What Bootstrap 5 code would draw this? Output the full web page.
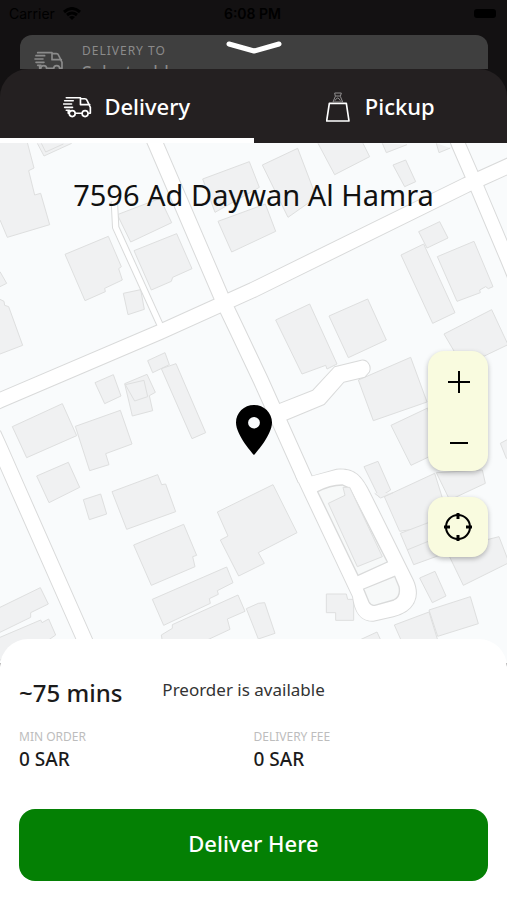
<!DOCTYPE html>
<html lang="en">
<head>
<meta charset="utf-8">
<meta name="viewport" content="width=device-width, initial-scale=1">
<title>Delivery location</title>
<link href="https://cdn.jsdelivr.net/npm/bootstrap@5.3.0/dist/css/bootstrap.min.css" rel="stylesheet">
<style>
  body { font-family: "Noto Sans", "Open Sans", sans-serif; background: #131112; color: #1b1b1b; }
  svg { display: block; fill: none; }
  .status { height: 27px; font: 14px/27px Inter, sans-serif; color: #000; padding: 0 11px 0 9px; }
  .status > * { flex: 1; }
  .clock { font-weight: 600; }
  .battery { width: 22px; height: 9px; border-radius: 3px; background: #000; }
  .address { height: 34px; margin: 8px 19px 0 20px; padding: 6px 14px 0; gap: 18px; border-radius: 12px 12px 0 0; background: #3f3f3f; color: #8b8b8b; font-size: 18px; line-height: 24px; }
  .address small { font-size: 12px; line-height: 19px; letter-spacing: 1px; }
  .address svg { margin-top: 10px; }
  .grabber { top: 40px; left: 50%; transform: translateX(-50%); }
  .tabs { background: #242021; border-radius: 28px 28px 0 0; }
  .tab { height: 74px; padding: 6px 0 0; gap: 12px; border: 0; border-bottom: 5px solid transparent; background: none; color: #fff; font-size: 22px; font-weight: 500; }
  .tab.active { border-color: #fff; }
  .tab-pickup { gap: 15px; }
  .map { min-height: 420px; background: #f9fbfc; }
  .map-title { font-size: 29px; line-height: 40px; padding-top: 32px; color: #111; }
  .pin { left: 50%; top: 60%; transform: translate(-50%, -100%); }
  .controls { right: 19px; bottom: 106px; gap: 26px; }
  .tool-box { border-radius: 16px; background: #f9fbdf; box-shadow: 0 2px 5px #0004; }
  .tool { width: 60px; height: 60px; border: 0; background: none; padding: 0; }
  .building { fill: #f0f1f2; stroke: #dedfdf; stroke-width: 3; }
  .casing { stroke: #d9dada; }
  .surface { stroke: #fff; }
  .island { fill: #f7f9f9; stroke: #d9dada; stroke-width: 4; }
  .summary { margin-top: -24px; padding: 38px 19px 19px; border-radius: 28px 28px 0 0; background: #fff; }
  .eta { font-size: 24px; line-height: 32px; font-weight: 500; margin-right: 40px; }
  .note { font-size: 17px; line-height: 26px; color: #333; }
  .terms { margin: 20px 0 36px; }
  .terms dt { font-size: 12px; line-height: 16px; font-weight: 400; color: #bdbdbd; }
  .terms dd { font-size: 19px; line-height: 28px; font-weight: 500; margin: 0; }
  .confirm { height: 72px; padding: 0 0 3px; border-radius: 16px; border: 0; background: #048004; color: #fff; font-size: 22px; font-weight: 500; }
</style>
<script src="https://cdn.jsdelivr.net/npm/bootstrap@5.3.0/dist/js/bootstrap.bundle.min.js"></script>
</head>
<body class="d-flex flex-column min-vh-100">
<svg width="0" height="0" class="position-absolute" aria-hidden="true">
  <symbol id="truck" viewBox="0 0 88 66">
    <g fill="none" stroke="currentColor" stroke-width="5" stroke-linejoin="round" stroke-linecap="round">
      <path d="M10 5H53V26H81M53 8H66Q71 8 73 13L83 34V52H78M5 14H31M2 24H26M5 34H29M16 43V52H18M38 52H57M10 43H20"/>
      <circle cx="28" cy="53" r="9"/><circle cx="67" cy="53" r="9"/>
    </g>
  </symbol>
</svg>

<header class="position-relative">
  <div class="status d-flex align-items-center">
    <div class="d-flex align-items-center gap-2">Carrier
      <svg width="18" height="13" viewBox="0 0 18 13" stroke="#000" stroke-width="3"><path d="M1 5Q9-2 17 5M4 8Q9 4 14 8"/><path d="M9 13L6 10Q9 8 12 10Z" fill="#000" stroke="none"/></svg>
    </div>
    <div class="clock text-center">6:08 PM</div>
    <div class="d-flex justify-content-end"><span class="battery"></span></div>
  </div>
  <div class="address d-flex overflow-hidden">
    <svg width="30" height="22"><use href="#truck"/></svg>
    <div><small class="d-block">DELIVERY TO</small>Select address</div>
  </div>
  <svg class="grabber position-absolute" width="58" height="16" viewBox="0 0 58 16" stroke="#fff" stroke-width="5" stroke-linecap="round" stroke-linejoin="round"><path d="M4 4L29 11L54 4"/></svg>
</header>

<nav class="tabs d-flex" aria-label="Order type">
  <button class="tab tab-delivery active w-50 d-flex align-items-center justify-content-center" type="button">
    <svg width="29" height="22"><use href="#truck"/></svg>Delivery
  </button>
  <button class="tab tab-pickup w-50 d-flex align-items-center justify-content-center" type="button">
    <svg width="24" height="30" viewBox="0 0 72 90" stroke="#fff" stroke-width="5" stroke-linejoin="round"><path d="M10 34H61L69 87H2Z"/><path d="M26 3H46L43 13L50 30H21L28 13ZM28 12H42M27 26Q35 10 43 26" stroke="#918f90" stroke-width="3"/></svg>Pickup
  </button>
</nav>

<main class="d-flex flex-column flex-grow-1">
  <section class="map position-relative flex-grow-1 overflow-hidden" aria-label="Map">
    <svg class="position-absolute top-0 start-0 w-100 h-100" viewBox="0 0 1521 1560" preserveAspectRatio="xMidYMin slice" aria-hidden="true">
      <g class="building">
        <g transform="translate(0 -9)">
          <path d="M-5 0H80L102 84L86 92L104 165L122 160L149 254L22 292L0 240H-5ZM112 10L132 48L215 10M124 10L137 36L190 12"/>
          <path d="M352 224L480 175L515 248L392 306ZM195 343L325 289L364 380L356 386L367 420L314 445L316 455L255 482ZM402 332L530 281L576 386L518 412L514 424L454 450ZM370 460L422 449L433 508L384 524ZM0 395L20 430L0 440M0 478L12 484L14 496L26 500L68 616L0 642"/>
          <path d="M608 117L748 65L778 142L645 217ZM654 244L796 192L827 274L695 336Z"/>
        </g>
        <g transform="translate(759 -9)">
          <path d="M28 75L134 25L190 172L105 232ZM195 10L245 104L350 50L330 10M388 10L400 38L462 14M420 75L458 60L488 125L455 140ZM550 10L558 38L592 24"/>
          <path d="M497 275L560 245L585 294L522 324ZM444 345L512 312L606 518L539 550ZM553 350L663 304L720 440L706 446L698 440L680 450L682 458L612 484ZM68 540L170 492L252 672L222 687L218 676L147 702ZM228 528L344 477L400 600L286 653ZM573 582L716 509L765 614L694 648L610 645Z"/>
        </g>
        <g transform="translate(0 561)">
          <path d="M285 158L340 134L363 198L314 221ZM443 92L495 68L508 104L458 128ZM484 116L528 101L617 308L576 326ZM374 161L441 133L466 187L448 197L458 242L397 258ZM376 164L432 151L443 200L404 213ZM37 290L187 221L230 317L80 383ZM226 289L361 241L396 342L317 371L327 404L269 422ZM110 438L205 397L239 472L147 518Z"/>
          <path d="M336 485L473 434L485 464L497 462L527 545L380 598ZM250 509L302 492L320 552L268 569Z"/>
        </g>
        <g transform="translate(759 561)">
          <path d="M316 150L473 82L522 216L361 272ZM414 286L524 234L550 370L474 406ZM333 410L375 394L413 480L378 502ZM394 500L545 430L592 580L440 604ZM550 428L688 420L697 460L590 510ZM742 340L770 325V385H760Z"/>
          <path d="M-107 546L60 464L132 608L16 668L34 700L-43 738L-98 630L-75 618Z"/>
        </g>
        <g transform="translate(0 1041)">
          <path d="M401 165L551 103L590 196L578 200L585 230L454 286ZM457 328L680 231L699 278L652 302L655 313L628 326L631 340L491 406ZM484 435L517 415V404L714 315L735 364L682 387L690 418L600 460H488ZM739 356L775 340L794 338L825 430L775 447ZM0 352L121 293L145 342L92 368V382L0 427M0 442L122 390L126 398L146 387L167 435L60 510H0"/>
        </g>
        <g transform="translate(759 1041)">
          <path d="M442 130L560 85L590 185L482 224ZM462 180L560 140M580 180L738 140L768 218L631 286ZM500 264L546 244L579 318L538 338ZM424 405L528 366L554 450H444ZM528 360L652 320L676 401L554 439ZM220 312H280L284 328H302V391H248V368H220ZM320 450L372 426L384 452M365 10L383 24L420 8"/>
        </g>
      </g>

      <g class="casing" stroke-linejoin="round">
        <path stroke-width="22" d="M343 175L347 253L480 545"/>
        <path stroke-width="49" d="M450-36L467 3L668 471L711 561L782 711L916 1010M-20 781L0 772L480 567L759 441L1399 126L1540 62M-20 872L0 916L55 1041L254 1491L300 1600"/>
        <path stroke-width="45" d="M1362-30L1376 6L1424 116L1521 346L1560 440"/>
        <path stroke-width="6" d="M820 790L939 743L1004 673L1084 653C1100 650 1114 668 1107 686L1094 701L1031 716L972 783L840 838ZM936 1001L1010 980C1065 976 1085 1000 1110 1052L1238 1310C1263 1365 1238 1406 1180 1420L1120 1433C1080 1435 1065 1405 1059 1361L889 1001L900 980Z"/>
      </g>
      <g class="surface" stroke-linejoin="round">
        <path stroke-width="16" d="M343 175L347 253L484 554"/>
        <path stroke-width="43" d="M450-36L467 3L668 471L711 561L782 711L916 1010M-20 781L0 772L480 567L759 441L1399 126L1540 62M-20 872L0 916L55 1041L254 1491L300 1600"/>
        <path stroke-width="39" d="M1362-30L1376 6L1424 116L1521 346L1560 440"/>
        <path fill="#fff" stroke="none" d="M820 790L939 743L1004 673L1084 653C1100 650 1114 668 1107 686L1094 701L1031 716L972 783L840 838ZM930 1001L1010 980C1065 976 1085 1000 1110 1052L1238 1310C1263 1365 1238 1406 1180 1420L1120 1433C1080 1435 1065 1405 1059 1361L889 1001L900 980Z"/>
      </g>
      <g transform="translate(759 1041)">
        <path class="island" d="M194 5Q230-14 268-15L290-5L403 216L315 256ZM332 297L425 259L438 290Q444 320 422 330L365 346Q355 348 348 336Z"/>
        <path class="building" d="M226 40L276 16L270-8H290L388 200L313 230Z"/>
      </g>
    </svg>
    <h1 class="map-title position-relative text-center fw-normal m-0">7596 Ad Daywan Al Hamra</h1>
    <svg class="pin position-absolute" width="36" height="50" viewBox="5 2 14 20" preserveAspectRatio="none" role="img" aria-label="Selected location"><path fill="#000" fill-rule="evenodd" d="M12 2C8.13 2 5 5.13 5 9c0 5.25 7 13 7 13s7-7.750 7-13c0-3.870-3.130-7-7-7zm0 9.400a2.300 2.300 0 1 1 0-4.600 2.300 2.300 0 0 1 0 4.600z"/></svg>
    <div class="controls position-absolute d-flex flex-column">
      <div class="tool-box d-flex flex-column">
        <button class="tool d-flex align-items-center justify-content-center" type="button" aria-label="Zoom in"><svg width="24" height="24" viewBox="0 0 24 24" stroke="#000" stroke-width="2"><path d="M2 13H24M13 2V24"/></svg></button>
        <button class="tool d-flex align-items-center justify-content-center" type="button" aria-label="Zoom out"><svg width="24" height="24" viewBox="0 0 24 24" stroke="#000" stroke-width="2"><path d="M4 14H22"/></svg></button>
      </div>
      <div class="tool-box">
        <button class="tool d-flex align-items-center justify-content-center" type="button" aria-label="Use my location"><svg width="30" height="30" viewBox="0 0 30 30" stroke="#000" stroke-width="2"><circle cx="15" cy="15" r="12"/><path stroke-width="3" d="M15 1V7M15 23V29M1 15H7M23 15H29"/></svg></button>
      </div>
    </div>
  </section>

  <section class="summary position-relative">
    <div class="d-flex">
      <div class="eta">~75 mins</div>
      <div class="note">Preorder is available</div>
    </div>
    <dl class="terms d-flex">
      <div class="w-50"><dt>MIN ORDER</dt><dd>0 SAR</dd></div>
      <div class="w-50"><dt>DELIVERY FEE</dt><dd>0 SAR</dd></div>
    </dl>
    <button class="confirm btn w-100" type="button">Deliver Here</button>
  </section>
</main>
</body>
</html>
